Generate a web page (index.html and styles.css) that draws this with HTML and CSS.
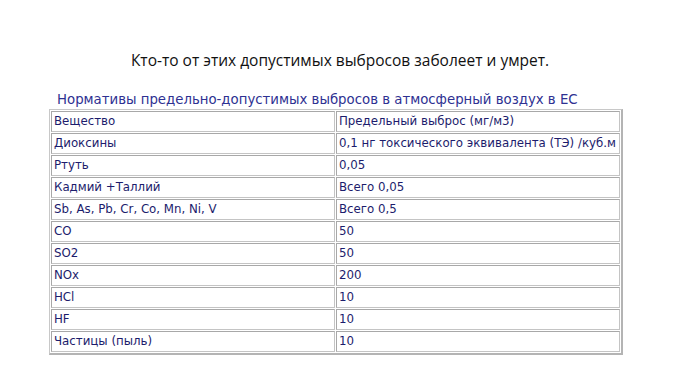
FILE: index.html
```html
<!DOCTYPE html>
<html lang="ru">
<head>
<meta charset="utf-8">
<link rel="stylesheet" href="styles.css">
</head>
<body>
<div class="slide">
  <h1 class="title">Кто-то от этих допустимых выбросов заболеет и умрет.</h1>
  <div class="block">
    <div class="caption">Нормативы предельно-допустимых выбросов в атмосферный воздух в ЕС</div>
    <table class="norms">
      <tr><td>Вещество</td><td>Предельный выброс (мг/м3)</td></tr>
      <tr><td>Диоксины</td><td>0,1 нг токсического эквивалента (ТЭ) /куб.м</td></tr>
      <tr><td>Ртуть</td><td>0,05</td></tr>
      <tr><td>Кадмий +Таллий</td><td>Всего 0,05</td></tr>
      <tr><td>Sb, As, Pb, Cr, Co, Mn, Ni, V</td><td>Всего 0,5</td></tr>
      <tr><td>CO</td><td>50</td></tr>
      <tr><td>SO2</td><td>50</td></tr>
      <tr><td>NOx</td><td>200</td></tr>
      <tr><td>HCl</td><td>10</td></tr>
      <tr><td>HF</td><td>10</td></tr>
      <tr><td>Частицы (пыль)</td><td>10</td></tr>
    </table>
  </div>
</div>
</body>
</html>
```
FILE: styles.css
```css
html, body { margin: 0; padding: 0; background: #fff; }
.slide { width: 700px; height: 379px; overflow: hidden; }
.title {
  margin: 0;
  padding: 49px 20px 0 0;
  height: 37px;
  box-sizing: content-box;
  text-align: center;
  font-family: "Open Sans", sans-serif;
  font-weight: normal;
  font-size: 15.5px;
  line-height: 22px;
  color: #111;
}
.block { margin-left: 49px; width: 574px; }
.caption {
  font-family: "DejaVu Sans", Verdana, sans-serif;
  font-size: 13.3px;
  line-height: 27px;
  color: #2e3192;
  padding-left: 8px;
  height: 23px;
  overflow: visible;
}
.norms {
  width: 574px;
  border-collapse: separate;
  border-spacing: 1px;
  border: 1px solid #c8c8c8;
  border-right: 2px solid #b4b4b4;
  border-bottom: 2px solid #b4b4b4;
  font-family: "DejaVu Sans", Verdana, sans-serif;
  font-size: 11.8px;
  color: #1c1c6c;
}
.norms td {
  border: 1px solid #c4c4c4;
  border-top-color: #a8a8a8;
  border-left-color: #a8a8a8;
  height: 19px;
  padding: 0 2px;
  line-height: 19px;
  white-space: nowrap;
}
.norms td:first-child { width: 278px; }
```
